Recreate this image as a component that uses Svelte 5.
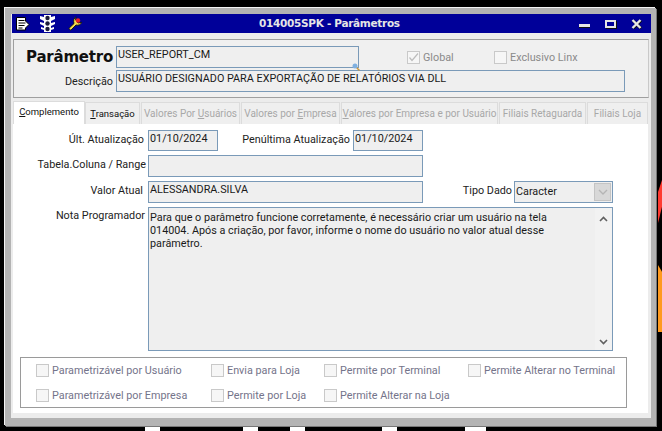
<script lang="ts">
	const tabs = [
		{ label: 'Complemento', key: 0, active: true },
		{ label: 'Transação', key: 0, enabled: true },
		{ label: 'Valores Por Usuários', key: 12, w: 99 },
		{ label: 'Valores por Empresa', key: 12, w: 99 },
		{ label: 'Valores por Empresa e por Usuário', key: 0, w: 157 },
		{ label: 'Filiais Retaguarda', w: 87 },
		{ label: 'Filiais Loja', w: 61 }
	];

	const flags = [
		['Parametrizável por Usuário', 'Envia para Loja', 'Permite por Terminal', 'Permite Alterar no Terminal'],
		['Parametrizável por Empresa', 'Permite por Loja', 'Permite Alterar na Loja', '']
	];

	// bits of whatever sits behind the window
	const scraps = [
		{ left: 145, width: 15 },
		{ left: 243, width: 15 },
		{ left: 290, width: 15 },
		{ left: 382, width: 15 },
		{ left: 465, width: 21 }
	];
</script>

<div class="screen">
	{#each scraps as s}
		<span class="scrap" style="left: {s.left}px; width: {s.width}px"></span>
	{/each}
	<span class="blob red"></span>
	<span class="blob orange"></span>

	<div class="window">
		<header class="titlebar">
			<div class="tools">
				<svg width="14" height="14" viewBox="0 0 14 14">
					<path d="M.5.500h9v3.500l3.500 3.500-3.500 3.500v2h-9z" fill="#fff" stroke="#000" />
					<path d="M2.500 3.500h6M2.500 6h7M2.500 8.500h6M2.500 11h4" stroke="#000" />
				</svg>
				<svg width="15" height="19" viewBox="0 0 15 19">
					<path d="M4 1h7v17H4zM0 2l4 1v4L0 5zM15 2l-4 1v4l4-2zM0 8l4 1v3L0 10zM15 8l-4 1v3l4-2zM1 13l3 1v2l-3-1zM14 13l-3 1v2l3-1z" fill="#fff" />
					<circle cx="7.500" cy="4" r="2.200" fill="#1c1c3a" />
					<circle cx="7.500" cy="9.500" r="2.200" fill="#1c1c3a" />
					<circle cx="7.500" cy="15" r="2.200" fill="#1c1c3a" />
				</svg>
				<svg class="wrench" width="15" height="15" viewBox="0 0 15 15">
					<path d="M.8 12.500L6 7.500C5 4.500 6 2 8 .8L7.500 3.500 10 7l3.800-.8C13 8.500 10.500 9.800 8 9L2.800 14.200z" fill="#f7d94a" stroke="#111" stroke-width=".9" />
					<circle cx="10" cy="4.500" r="2.200" fill="#ee1c25" />
				</svg>
			</div>
			<h1>014005SPK - Parâmetros</h1>
			<div class="controls">
				<span class="min"></span>
				<span class="max"></span>
				<svg width="11" height="10" viewBox="0 0 11 10"><path d="M1.500 1l8 8M9.500 1l-8 8" stroke="#111" stroke-width="3" transform="translate(.5 .5)" /><path d="M1.500 1l8 8M9.500 1l-8 8" stroke="#e6e6e6" stroke-width="2.400" /></svg>
			</div>
		</header>

		<section class="head">
			<div class="param-row">
				<strong>Parâmetro</strong>
				<div class="field code">
					USER_REPORT_CM
					<svg class="lookup" width="8" height="8" viewBox="0 0 8 8"><path d="M4.500 4.500L7.500 7.500" stroke="#c9963c" stroke-width="1.500" /><circle cx="3" cy="3" r="2.500" fill="#7fb0e0" /></svg>
				</div>
				<label class="check global"><span class="box"><svg width="11" height="11" viewBox="0 0 11 11"><path d="M1.500 5.500l2.500 3 6-7" fill="none" stroke="#bcbcbc" stroke-width="1.200" /></svg></span>Global</label>
				<label class="check linx"><span class="box"></span>Exclusivo Linx</label>
			</div>
			<div class="desc-row">
				<span class="desc-label">Descrição</span>
				<div class="field desc">USUÁRIO DESIGNADO PARA EXPORTAÇÃO DE RELATÓRIOS VIA DLL</div>
			</div>
		</section>

		<nav class="tabs">
			{#each tabs as tab}
				<div class="tab" class:active={tab.active} class:enabled={tab.enabled} style={tab.w ? `width: ${tab.w}px` : ''}>
					{#if tab.key !== undefined}{tab.label.slice(0, tab.key)}<u>{tab.label[tab.key]}</u>{tab.label.slice(tab.key + 1)}{:else}{tab.label}{/if}
				</div>
			{/each}
		</nav>

		<main class="content">
			<div class="form">
				<span class="lbl ult">Últ. Atualização</span>
				<div class="dates">
					<div class="field date">01/10/2024</div>
					<span class="lbl penult">Penúltima Atualização</span>
					<div class="field date">01/10/2024</div>
				</div>

				<span class="lbl">Tabela.Coluna / Range</span>
				<div class="field wide"></div>

				<span class="lbl valor">Valor Atual</span>
				<div class="value-row">
					<div class="field wide">ALESSANDRA.SILVA</div>
					<span class="lbl tipo">Tipo Dado</span>
					<div class="field select">
						Caracter
						<span class="arrow"><svg width="10" height="6" viewBox="0 0 10 6"><path d="M1 1l4 4 4-4" fill="none" stroke="#b5b5b5" stroke-width="1.300" /></svg></span>
					</div>
				</div>

				<span class="lbl nota">Nota Programador</span>
				<div class="field memo">
					<p>Para que o parâmetro funcione corretamente, é necessário criar um usuário na tela 014004. Após a criação, por favor, informe o nome do usuário no valor atual desse parâmetro.</p>
					<div class="scroll">
						<svg width="9" height="6" viewBox="0 0 9 6"><path d="M1 5l3.500-3.500L8 5" fill="none" stroke="#606060" stroke-width="1.600" /></svg>
						<svg width="9" height="6" viewBox="0 0 9 6"><path d="M1 1l3.500 3.500L8 1" fill="none" stroke="#606060" stroke-width="1.600" /></svg>
					</div>
				</div>
			</div>

			<div class="flags">
				{#each flags as row}
					{#each row as flag}
						{#if flag}
							<label class="check"><span class="box"></span>{flag}</label>
						{:else}
							<span></span>
						{/if}
					{/each}
				{/each}
			</div>
		</main>
	</div>
</div>

<style>
	:global(body) {
		margin: 0;
		background: #000;
	}

	.screen {
		position: relative;
		width: 662px;
		height: 431px;
		overflow: hidden;
		background: #000;
		font-family: Roboto, 'Noto Sans', sans-serif;
		font-size: 10.8px;
		color: #111;
		padding: 8px 0 0 5px;
		box-sizing: border-box;
	}

	.scrap {
		position: absolute;
		top: 427px;
		height: 4px;
		background: #fff;
	}

	.blob {
		position: absolute;
		left: 658px;
		width: 4px;
	}

	.red {
		top: 180px;
		height: 43px;
		background: #ff3a30;
		clip-path: polygon(100% 0, 0 28%, 0 100%, 100% 62%);
	}

	.orange {
		top: 265px;
		height: 67px;
		background: #ff9a1e;
		clip-path: polygon(0 0, 100% 10%, 100% 100%, 0 100%);
	}

	.window {
		width: 651px;
		height: 418px;
		box-sizing: border-box;
		background: #ececec;
		border: 6px solid #b3b3b3;
		border-right-width: 5px;
		border-bottom-width: 8px;
		box-shadow: -1px -1px 0 #f4f4f4, 1px 1px 0 #777;
		padding: 0 1px 0 2px;
		display: flex;
		flex-direction: column;
	}

	.titlebar {
		height: 19px;
		margin: 0 -1px 0 -1px;
		background: #000099;
		color: #e6e6e6;
		display: flex;
		align-items: center;
		position: relative;
		flex-shrink: 0;
	}

	.tools {
		display: flex;
		align-items: center;
		padding-left: 4px;
		gap: 10px;
	}

	.wrench {
		margin-left: 3px;
	}

	h1 {
		position: absolute;
		left: 247px;
		top: 3px;
		margin: 0;
		font-family: 'DejaVu Sans', sans-serif;
		font-size: 10.5px;
		line-height: 13px;
		font-weight: 700;
		letter-spacing: -0.300px;
	}

	.controls {
		margin-left: auto;
		display: flex;
		align-items: center;
		gap: 15px;
		padding-right: 9px;
	}

	.min {
		box-sizing: border-box;
		width: 11px;
		height: 4px;
		background: #e6e6e6;
		border-bottom: 1px solid #111;
		margin-top: 5px;
	}

	.max {
		box-sizing: border-box;
		width: 11px;
		height: 8px;
		border: 2px solid #e6e6e6;
		border-bottom-width: 2px;
		box-shadow: 1px 1px 0 #111;
	}

	.head {
		margin: 6px 0 0 0;
		height: 59px;
		width: 636px;
		box-sizing: border-box;
		border: 1px solid #9f9f9f;
		border-right-color: #c9c9c9;
		background: #f0f0f0;
		flex-shrink: 0;
		padding-top: 6px;
	}

	.param-row {
		display: flex;
		height: 22px;
		align-items: center;
		position: relative;
	}

	.param-row strong {
		font-family: 'DejaVu Sans', sans-serif;
		font-size: 15px;
		font-weight: 700;
		margin-left: 12px;
		width: 90px;
		flex-shrink: 0;
		letter-spacing: -0.200px;
		color: #111;
	}

	.field {
		box-sizing: border-box;
		border: 1px solid #7a9ab8;
		background: #efefef;
		padding: 0 1px;
		line-height: 15px;
		color: #1a1a1a;
		white-space: nowrap;
	}

	.code {
		height: 22px;
		width: 243px;
		position: relative;
	}

	.lookup {
		position: absolute;
		right: -2px;
		bottom: -4px;
	}

	.check {
		display: flex;
		align-items: center;
		gap: 3px;
		color: #74748a;
		white-space: nowrap;
	}

	.box {
		box-sizing: border-box;
		width: 13px;
		height: 13px;
		border: 1px solid #c9c9c9;
		background: #f6f6f6;
		flex-shrink: 0;
		display: block;
	}

	.box svg {
		display: block;
	}

	.global {
		margin-left: 48px;
		width: 87px;
		color: #8a8a8a;
	}

	.linx {
		color: #8a8a8a;
	}

	.desc-row {
		display: flex;
		margin-top: 2px;
		height: 22px;
		align-items: center;
	}

	.desc-label {
		width: 102px;
		text-align: right;
		padding-right: 3px;
		box-sizing: border-box;
		color: #222;
	}

	.desc {
		height: 22px;
		width: 509px;
	}

	.tabs {
		display: flex;
		align-items: flex-end;
		height: 23px;
		margin-top: 3px;
		flex-shrink: 0;
		width: 636px;
	}

	.tab {
		box-sizing: border-box;
		height: 22px;
		line-height: 21px;
		text-align: center;
		color: #a8a8a8;
		background: #efefef;
		border: 1px solid #dcdcdc;
		border-bottom: 0;
		margin-right: 1px;
		font-size: 10px;
		white-space: nowrap;
		overflow: hidden;
	}

	.tab.enabled {
		width: 55px;
		font-size: 9.5px;
		color: #111;
		margin-right: 1px;
	}

	.tab.active {
		width: 72px;
		height: 23px;
		line-height: 19px;
		font-size: 9.5px;
		background: #fff;
		color: #111;
		margin-right: 0;
	}

	.content {
		flex: 1;
		width: 635px;
		background: #fff;
		margin-bottom: 5px;
		padding: 6px 0 0 0;
		box-sizing: border-box;
		display: flex;
		flex-direction: column;
	}

	.form {
		display: grid;
		grid-template-columns: 133px 465px;
		row-gap: 4px;
		column-gap: 2px;
	}

	.lbl {
		text-align: right;
		line-height: 20px;
		white-space: nowrap;
		color: #222;
	}

	.ult {
		padding-right: 2px;
	}

	.valor {
		padding-right: 3px;
	}

	.dates {
		display: flex;
		width: 275px;
	}

	.date {
		width: 70px;
		height: 21px;
	}

	.penult {
		margin: 0 3px 0 auto;
	}

	.form > .field.wide {
		height: 22px;
		width: 275px;
	}

	.value-row {
		display: flex;
	}

	.value-row .wide {
		width: 275px;
		height: 22px;
	}

	.tipo {
		margin: 0 2px 0 auto;
	}

	.select {
		width: 99px;
		height: 22px;
		display: flex;
		align-items: center;
		justify-content: space-between;
		padding-right: 1px;
		line-height: 18px;
	}

	.arrow {
		width: 17px;
		height: 18px;
		background: #d8d8d8;
		border: 1px solid #c4c4c4;
		box-sizing: border-box;
		display: flex;
		align-items: center;
		justify-content: center;
	}

	.nota {
		line-height: 18px;
		padding-right: 1px;
	}

	.memo {
		height: 144px;
		display: flex;
		justify-content: space-between;
		padding: 3px 0 0 1px;
		white-space: normal;
	}

	.memo p {
		margin: 0;
		width: 425px;
		line-height: 13px;
	}

	.scroll {
		width: 17px;
		margin-top: -3px;
		background: #f2f2f2;
		display: flex;
		flex-direction: column;
		justify-content: space-between;
		align-items: center;
		padding: 8px 0 5px;
	}

	.flags {
		margin: 6px 0 0 7px;
		width: 607px;
		height: 51px;
		box-sizing: border-box;
		border: 1px solid #9a9a9a;
		display: grid;
		grid-template-columns: 175px 113px 144px 1fr;
		grid-template-rows: 25px 25px;
		padding: 0 0 0 15px;
		align-items: center;
	}
</style>
